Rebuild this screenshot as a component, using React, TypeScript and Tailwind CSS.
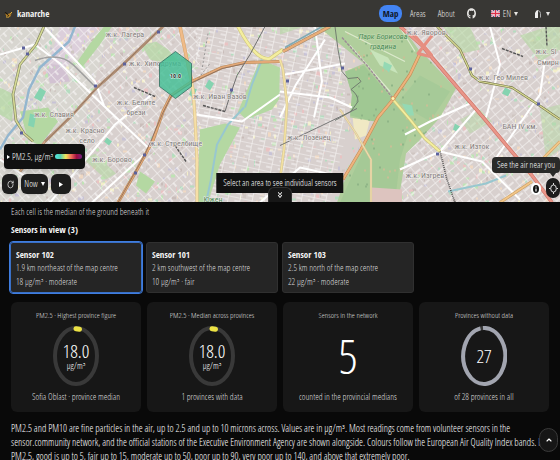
import React from "react";
import { ChevronUp, ChevronsDown, RotateCw } from "lucide-react";
import { FaGithub } from "react-icons/fa";

const FONT = "font-['Open_Sans_Condensed_Light','Liberation_Sans',sans-serif]";
const BOLD = "font-['Open_Sans_Condensed','Liberation_Sans',sans-serif] font-bold";
const MAP_FONT = "font-['Roboto_Condensed','Liberation_Sans',sans-serif]";

const sensors = [
  { name: "Sensor 102", place: "1.9 km northeast of the map centre", value: "18 µg/m³ · moderate", active: true },
  { name: "Sensor 101", place: "2 km southwest of the map centre", value: "10 µg/m³ · fair", active: false },
  { name: "Sensor 103", place: "2.5 km north of the map centre", value: "22 µg/m³ · moderate", active: false },
];

const stats = [
  { title: "PM2.5 · Highest province figure", value: "18.0", unit: "µg/m³", note: "Sofia Oblast · province median", ring: "low" },
  { title: "PM2.5 · Median across provinces", value: "18.0", unit: "µg/m³", note: "1 provinces with data", ring: "low" },
  { title: "Sensors in the network", value: "5", unit: "", note: "counted in the provincial medians", ring: "none" },
  { title: "Provinces without data", value: "27", unit: "", note: "of 28 provinces in all", ring: "full" },
];

const labels: [number, number, string][] = [
  [125, 37, "ж.к. Лагера"],
  [155, 66, "ж.к. Хиподрума"],
  [136, 105, "ж.к. Белите"],
  [136, 115, "брези"],
  [54, 117, "ж.к. Славия"],
  [220, 99, "ж.к. Иван Вазов"],
  [85, 133, "ж.к. Красно"],
  [87, 143, "село"],
  [112, 162, "ж.к. Борово"],
  [176, 146, "ж.к. Стрелбище"],
  [309, 140, "ж.к. Лозенец"],
  [426, 35, "ж.к. Яворов"],
  [503, 80, "ж.к. Гео Милев"],
  [546, 54, "ж.к. Sl"],
  [548, 65, "Смирн"],
  [472, 149, "ж.к. Изток"],
  [520, 129, "БАН IV км."],
  [425, 178, "ж.к. Изгрев"],
];

function rand(seed: number) {
  let s = seed;
  return () => {
    s = (s * 16807) % 2147483647;
    return s / 2147483647;
  };
}

function makeSpecks() {
  const r = rand(77);
  const tones = ["#c9bdba", "#bfe3b5", "#f0d9c4", "#e9c3c3", "#c8c3d6", "#f3efc9", "#b5dcc0", "#cfc6c2"];
  return Array.from({ length: 1500 }, () => ({
    x: Math.round(r() * 560),
    y: Math.round(27 + r() * 176),
    w: 1 + Math.round(r() * 3),
    h: 1 + Math.round(r() * 3),
    c: tones[Math.floor(r() * tones.length)],
  }));
}

function makeTrees() {
  const r = rand(31);
  return Array.from({ length: 170 }, () => ({
    x: Math.round(335 + r() * 115),
    y: Math.round(30 + r() * 172),
    c: r() > 0.5 ? "#8fb587" : "#c9bf96",
  }));
}

const specks = makeSpecks();
const trees = makeTrees();

function Road({ d, edge, fill, w }: { d: string; edge: string; fill: string; w: number }) {
  return (
    <>
      <path d={d} stroke={edge} strokeWidth={w + 1.2} />
      <path d={d} stroke={fill} strokeWidth={w} />
    </>
  );
}

function CityMap() {
  return (
    <svg
      className="absolute inset-0 size-full"
      viewBox="0 27 560 176"
      preserveAspectRatio="xMidYMid slice"
      role="img"
      aria-label="Map of air quality"
    >
      <defs>
        <pattern id="gridA" width="13" height="9" patternUnits="userSpaceOnUse" patternTransform="rotate(-42)">
          <path d="M0 0H13M0 0V9M6 0V5" stroke="#f8f6f5" strokeWidth="1.2" fill="none" />
        </pattern>
        <pattern id="gridB" width="12" height="8" patternUnits="userSpaceOnUse" patternTransform="rotate(12)">
          <path d="M0 0H12M0 0V8M7 4H12" stroke="#f8f6f5" strokeWidth="1.2" fill="none" />
        </pattern>
        <pattern id="gridC" width="14" height="9" patternUnits="userSpaceOnUse" patternTransform="rotate(50)">
          <path d="M0 0H14M0 0V9M8 3V9" stroke="#f8f6f5" strokeWidth="1.2" fill="none" />
        </pattern>
        <clipPath id="park">
          <path d="M318 27H402L420 52L425 56L456 89L440 118L420 140L406 154L402 180L398 203H337L345 180L362 150L375 122L350 118L352 95L345 72L364 64Z" />
        </clipPath>
      </defs>
      <rect y="27" width="560" height="176" fill="#d8d0ce" />
      <path d="M0 27H110L60 203H0Z" fill="#d8d6d0" />
      <path d="M60 27H100L60 75H45Z" fill="#dccfdb" />
      <path d="M45 64L64 66L70 82L50 84Z" fill="#d2c2d2" />
      <g>
        {specks.map((s, i) => (
          <rect key={i} x={s.x} y={s.y} width={s.w} height={s.h} fill={s.c} />
        ))}
      </g>
      <rect y="27" width="200" height="176" fill="url(#gridA)" />
      <path d="M196 27H345V140L330 203H196Z" fill="url(#gridB)" />
      <path d="M402 27H560V203H398L406 154L456 89Z" fill="url(#gridC)" />

      <g fill="#b4d8a2">
        <path d="M112 27L100 45L82 68L76 64L90 44L104 27Z" />
        <path d="M142 46L156 42L168 50L180 62L166 64L150 60Z" opacity=".7" />
        <path d="M20 112L48 108L58 122L40 146L28 140Z" />
        <path d="M260 60L280 68L279 100L272 110L246 120L238 112Z" />
        <path d="M200 130L225 124L240 128L220 165L208 203H197Z" />
        <path d="M140 172L155 182L146 194L136 186Z" />
        <path d="M95 154L116 174L106 180L84 160Z" opacity=".6" />
        <path d="M520 36L548 27H560V50L540 62Z" opacity=".6" />
        <path d="M443 27L470 27L480 50L462 54Z" opacity=".6" />
        <path d="M460 120L480 110L492 122L470 134Z" opacity=".5" />
        <path d="M540 110L560 105V150L546 160Z" opacity=".5" />
        <path d="M280 35L304 27H280Z" opacity=".6" />
        <path d="M0 88L14 95L12 122L0 115Z" opacity=".7" />
      </g>
      <g fill="#85d3b0">
        <path d="M40 88L46 92L41 102L34 98Z" />
        <path d="M30 114L36 116L34 128L28 126Z" />
        <path d="M209 80L214 84L210 91L205 87Z" />
        <path d="M192 88L197 90L193 98L189 95Z" />
        <path d="M505 88L511 91L508 97L502 94Z" />
        <path d="M455 124L460 127L458 133L453 130Z" />
        <path d="M107 138L112 142L109 146L104 142Z" />
      </g>
      <path d="M352 112H372L366 136L355 140Z" fill="#f0e9c4" />

      <g clipPath="url(#park)">
        <rect x="310" y="27" width="150" height="176" fill="#b0ce9c" />
        <path d="M345 72L364 66L392 99L374 122L350 116Z" fill="#a0c893" />
        <path d="M398 103L420 76L450 92L430 122Z" fill="#a6ca98" />
        <path d="M375 125L392 102L412 122L400 160L395 203H340Z" fill="#a5c996" />
        {trees.map((t, i) => (
          <rect key={i} x={t.x} y={t.y} width="2" height="2" fill={t.c} />
        ))}
        <path d="M370 50L388 58L398 74L380 66Z" fill="#c8e4bb" />
        <path d="M384 62L392 66L389 73L383 68Z" fill="#94d9b4" />
        <path d="M402 104L412 106L414 116L408 116Z" fill="#94d9b4" />
        <path d="M345 32L405 62M350 46L390 92M400 28L415 52" stroke="#dce9cd" strokeWidth="1.2" fill="none" />
      </g>
      <path d="M372 188L402 190V203H371Z" fill="#ddc4bf" />

      <g fill="none" strokeLinejoin="round">
        <path d="M75 27L69 42L40 68L29 90L23 118L8 136L0 150" stroke="#93b6cf" strokeWidth="2.4" />
        <path d="M244 108L228 125L217 145L211 180L206 203M245 108L252 85L262 60" stroke="#98c7cf" strokeWidth="2" />
        <path d="M448 192L486 184L506 176" stroke="#98c7cf" strokeWidth="2" />
        <path
          d="M0 55L35 45L60 64L95 98L150 150M45 28L95 82L104 106M196 115L242 122L280 95M280 92L330 98L352 108M280 118L296 85L325 40M315 27L322 82L314 118M285 75L345 64M400 170L440 152L476 110M440 152L482 162L520 200M490 27L500 65L486 118M545 60L540 95L495 160M50 203L115 125L152 95M0 160L45 190M405 135L430 122L470 104M260 203L300 168L345 178M92 203L150 150"
          stroke="#fff"
          strokeWidth="2"
        />
        <path d="M35 61Q60 52 74 66L95 87" stroke="#a0a0a0" strokeWidth="1.6" />
        <Road d="M44 27L36 45L20 65L13 95L16 121L24 134L33 142" edge="#7d8060" fill="#d5d994" w={1.6} />
        <Road d="M180 27L184 46L188 66L193 90L195 118L197 160L197 203" edge="#dcc38d" fill="#f6dfa6" w={2} />
        <Road d="M180 27L184 46L189 70L192 82" edge="#d8a876" fill="#f0bb88" w={2.2} />
        <Road d="M163 27L124 64L97 88L72 116L45 142L20 172" edge="#a58465" fill="#d5a98a" w={1.4} />
        <path d="M163 27L124 64L97 88L72 116L45 142" stroke="#6e5e57" strokeWidth=".7" />
        <Road d="M280 62L245 63L222 68L192 82L171 96L163 112L153 141L136 172L118 203" edge="#b98b5e" fill="#e4a977" w={2} />
        <path d="M245 64L222 69L192 83L171 97L163 113L145 155L118 203" stroke="#776257" strokeWidth=".7" />
        <Road d="M238 27Q256 62 270 59L283 50" edge="#cfc879" fill="#f4ee9f" w={2.4} />
        <Road d="M280 60L283 70L287 105L284 150L280 180L282 203" edge="#d8c890" fill="#f5e3a4" w={1.4} />
        <Road d="M283 52L330 27" edge="#a48769" fill="#e9ad77" w={2.4} />
        <path d="M285 48L322 27" stroke="#7faab4" strokeWidth="1.6" />
        <Road d="M420 54L410 75L393 100L378 118L361 150L343 180" edge="#c48d56" fill="#eeb37d" w={2} />
        <Road d="M340 110L356 134L371 160V203" edge="#d9c89b" fill="#f2dfae" w={1} />
        <Road d="M393 100L410 120L425 139L440 152" edge="#cfc879" fill="#f4ee9f" w={1.8} />
        <Road d="M437 27L460 50L472 76L480 82L512 88L535 103L560 120" edge="#77774b" fill="#d8da93" w={1.2} />
        <Road d="M532 170L560 142M532 182L500 203" edge="#cba060" fill="#f2c589" w={1.8} />
        <Road d="M400 27L422 46L432 58L455 85L485 120L510 150L532 176L552 203" edge="#cf7468" fill="#ea9689" w={2.4} />
        <path d="M432 36L418 54L430 57M413 34L432 56" stroke="#e68e80" strokeWidth="3" />
        <path d="M265 27L250 55L237 76L230 96L225 112" stroke="#707070" strokeWidth="1" />
        <path d="M280 146L322 126L357 109" stroke="#777" strokeWidth="1" />
        <path d="M335 27L338 50L342 72L348 79L358 78L361 82L351 90Q358 95 358 102L351 112L335 121" stroke="#6b746b" strokeWidth=".9" />
        <path d="M342 38L367 66L393 99" stroke="#9d8c97" strokeWidth="1.4" strokeDasharray="3 1" />
        <path d="M208 34L202 70M196 82L210 64" stroke="#888" strokeWidth=".8" strokeDasharray="2 2" />
        <path d="M134 88L155 97M203 106L225 112M173 143L186 162M502 49L523 57M546 27L547 47" stroke="#555" strokeWidth="1.4" strokeDasharray="3 1" />
        <path d="M440 152L447 180L455 203" stroke="#555" strokeWidth="1.6" strokeDasharray="1 1" />
        <circle cx="393" cy="99" r="2" fill="#fff2b5" stroke="#d89c5f" />
      </g>
      <g fill="#5d629c">
        {[[23, 48], [27, 54], [95, 86], [158, 32], [124, 64], [21, 133], [144, 155], [135, 173], [231, 90], [287, 81], [342, 68], [437, 154], [470, 69], [538, 104]].map(([x, y]) => (
          <rect key={`${x}-${y}`} x={x - 1} y={y - 1} width="3" height="3" />
        ))}
      </g>
      <g className={MAP_FONT} fontSize="8" textAnchor="middle" fill="#827c7a" stroke="#f2efed" strokeWidth="1" paintOrder="stroke">
        {labels.map(([x, y, t]) => (
          <text key={t + x} x={x} y={y}>{t}</text>
        ))}
        <g fill="#4c8a54" stroke="#c5ddb6" fontStyle="italic">
          <text x="383" y="39">Парк Борисова</text>
          <text x="383" y="49">градина</text>
        </g>
        <text x="213" y="202" fill="#4c8a54">Южен</text>
      </g>
      <path d="M175.500 52L191.500 64V87L175.500 99L159.500 87V64Z" fill="#3fbe94" fillOpacity=".8" stroke="#336f61" strokeWidth=".8" />
      <text x="175.500" y="78.500" textAnchor="middle" fontSize="6" className={`${MAP_FONT} font-bold`} fill="#26302d" stroke="#e6f8f1" strokeWidth="1" paintOrder="stroke">
        10.0
      </text>
    </svg>
  );
}

function Flag() {
  return (
    <svg className="h-[7px] w-[9px]" viewBox="0 0 9 7" aria-hidden="true">
      <rect width="9" height="7" fill="#34437d" />
      <path d="M0 0L9 7M9 0L0 7" stroke="#fff" strokeWidth="1.6" />
      <path d="M0 0L9 7M9 0L0 7" stroke="#d33a50" strokeWidth=".6" />
      <path d="M4.500 0V7M0 3.500H9" stroke="#fff" strokeWidth="2.4" />
      <path d="M4.500 0V7M0 3.500H9" stroke="#dd2f48" strokeWidth="1.3" />
    </svg>
  );
}

function Caret() {
  return (
    <svg className="h-1 w-1" viewBox="0 0 4 4" aria-hidden="true">
      <path d="M0 0H4L2 4Z" fill="currentColor" />
    </svg>
  );
}

function Header() {
  return (
    <header className="flex h-[27px] items-center bg-[#383734] pr-2.5 pl-1 text-[9px] leading-[10px] text-[#e6e5e2]">
      <a href="#home" className={`flex items-center gap-1 text-[#f3f3f2] ${BOLD}`}>
        <svg className="h-2.5 w-[9px]" viewBox="0 0 9 10" aria-hidden="true">
          <path d="M1 4L3 4.500L4 5L6 4L8 3L7 6L6 8L3 8.500L2 6.500Z" fill="#b98226" />
          <path d="M1 3.500L4 5.500M3 8L5 6.500M6 4L7 5" stroke="#171510" strokeWidth="1.200" fill="none" />
          <path d="M6 5L8 3M2 8H5" stroke="#f2c247" strokeWidth=".8" />
        </svg>
        kanarche
      </a>
      <nav className="ml-auto flex items-center">
        <a href="#map" className={`mr-2 flex h-[17px] w-[23px] items-center justify-center rounded-lg bg-[#4384f3] text-[#10182a] ${BOLD}`}>Map</a>
        <a href="#areas" className="mr-3">Areas</a>
        <a href="#about" className="mr-3">About</a>
        <a href="#source" aria-label="GitHub" className="mr-[15px]">
          <FaGithub className="h-[11px] w-[9px]" preserveAspectRatio="none" />
        </a>
        <button type="button" className="mr-[17px] flex items-center gap-[3px]">
          <Flag /> EN <Caret />
        </button>
        <button type="button" aria-label="Theme" className="flex items-center gap-[5px]">
          <svg className="h-2 w-1.5" viewBox="0 0 6 8" aria-hidden="true">
            <path d="M0 3Q1 0 3 0V8H0Z" fill="#eee" />
            <path d="M3 .5Q5.500 1 5.500 3.500V7.500" fill="none" stroke="#aaa" />
          </svg>
          <Caret />
        </button>
      </nav>
    </header>
  );
}

function MapPanel() {
  return (
    <section className="relative h-[175px] overflow-hidden text-[9px] leading-[10px] text-white">
      <CityMap />
      <div className="absolute bottom-2 left-0.5 flex flex-col items-start gap-[5px]">
        <button type="button" className="ml-0.5 flex h-[25px] items-center gap-0.5 rounded bg-[#111] px-[3px] whitespace-nowrap shadow-md">
          <svg className="h-1 w-[3px]" viewBox="0 0 3 4" aria-hidden="true"><path d="M0 0L3 2L0 4Z" fill="#fff" /></svg>
          PM2.5, µg/m³
          <span className="h-[5px] w-[27px] rounded-full bg-[linear-gradient(90deg,#50e6e0,#55ceb0,#efe65a,#ef6a58,#9c0d40,#742083)]" />
        </button>
        <div className="flex gap-[3px]">
          <button type="button" aria-label="Reload" className="flex h-5 w-4 items-center justify-center rounded-md bg-[#1e1e1d] shadow">
            <RotateCw className="h-[9px] w-[7px]" strokeWidth={2} preserveAspectRatio="none" />
          </button>
          <button type="button" className="flex h-5 w-[27px] items-center justify-center gap-[3px] rounded-md bg-[#1e1e1d] shadow">
            Now <Caret />
          </button>
          <button type="button" aria-label="Play" className="flex h-5 w-5 items-center justify-center rounded-md bg-[#1e1e1d] shadow">
            <svg className="h-[5px] w-1" viewBox="0 0 4 5" aria-hidden="true"><path d="M0 0L4 2.500L0 5Z" fill="#fff" /></svg>
          </button>
        </div>
      </div>
      <p className="absolute bottom-[9px] left-1/2 flex h-5 -translate-x-1/2 items-center bg-[#121212] px-[7px] whitespace-nowrap">
        Select an area to see individual sensors
      </p>
      <button type="button" aria-label="Collapse map" className="absolute bottom-0 left-1/2 flex h-[15px] w-6 -translate-x-1/2 items-center justify-center rounded-t-md border border-b-0 border-[#333] bg-[#171717]">
        <ChevronsDown className="h-2.5 w-2" strokeWidth={2.5} preserveAspectRatio="none" />
      </button>
      <div className="absolute right-0 bottom-1 flex flex-col items-end">
        <p className="flex h-4 items-center rounded bg-[#2a2a29] px-[5px] whitespace-nowrap">See the air near you</p>
        <svg className="mr-1 h-[5px] w-1.5" viewBox="0 0 6 5" aria-hidden="true"><path d="M0 0H6L3 4Z" fill="#2a2a29" /></svg>
        <div className="flex items-end gap-[5px]">
          <button type="button" aria-label="Attribution" className="mb-[3px] flex h-3 w-2.5 items-center justify-center rounded-full bg-white">
            <svg className="h-2 w-1.5" viewBox="0 0 6 8" aria-hidden="true">
              <ellipse cx="3" cy="4" rx="3" ry="4" fill="#111" />
              <path d="M3 3.500V6.500M3 1.500V2.500" stroke="#fff" strokeWidth="1.200" />
            </svg>
          </button>
          <button type="button" aria-label="Locate me" className="flex h-5 w-3.5 items-center justify-center rounded-full bg-[#1c1c1c]">
            <svg className="h-[11px] w-[9px]" viewBox="0 0 9 11" aria-hidden="true">
              <ellipse cx="4.500" cy="5.500" rx="2.800" ry="3.600" fill="none" stroke="#ddd" />
              <path d="M4.500 0V2M4.500 9V11M0 5.500H1.500M7.500 5.500H9" fill="none" stroke="#ddd" />
            </svg>
          </button>
        </div>
      </div>
    </section>
  );
}

function Ring({ full }: { full: boolean }) {
  return (
    <svg className="absolute inset-0 size-full" viewBox="0 0 46 60" aria-hidden="true">
      <ellipse cx="23" cy="30" rx="21" ry="28" fill="none" stroke="#393939" strokeWidth="4" />
      {full ? (
        <path d="M22 2A21 28 0 1 1 19.500 2.400" fill="none" stroke="#a2a5b0" strokeWidth="4" />
      ) : (
        <path d="M23 2.700L26.500 3.200" fill="none" stroke="#ece244" strokeWidth="5" strokeLinecap="round" />
      )}
    </svg>
  );
}

export default function App() {
  return (
    <div className={`min-h-screen overflow-x-hidden bg-[#090909] text-white ${FONT}`}>
      <Header />
      <MapPanel />
      <main className="px-2.5 pt-[5px]">
        <p className="pl-px text-[9px] leading-[10px] text-[#dcdcdc]">Each cell is the median of the ground beneath it</p>
        <h2 className={`mt-2 pl-px text-[9px] leading-[10px] text-[#f5f5f5] ${BOLD}`}>Sensors in view (3)</h2>
        <div className="mt-[7px] flex gap-1">
          {sensors.map((s) => (
            <button
              key={s.name}
              type="button"
              className={`h-[51px] w-[132px] rounded-[3px] border bg-[#252525] px-[5px] text-left ${s.active ? "border-[#3a70c6] outline-1 outline-[#3f7de0]" : "border-[#303030]"}`}
            >
              <strong className={`block text-[9px] leading-[13px] text-[#f5f5f5] ${BOLD}`}>{s.name}</strong>
              <span className="block text-[9px] leading-[14px] whitespace-nowrap text-[#dcdcdc]">{s.place}</span>
              <span className="block text-[9px] leading-[13px] whitespace-nowrap text-[#dcdcdc]">{s.value}</span>
            </button>
          ))}
        </div>
        <div className="mt-[9px] grid grid-cols-4 gap-1.5 px-px">
          {stats.map((s) => (
            <article key={s.title} className="flex h-[110px] flex-col items-center rounded-md bg-[#171717] pt-2 text-center">
              <h3 className="text-[8px] leading-[10px] whitespace-nowrap text-[#dcdcdc]">{s.title}</h3>
              <div className="relative mt-1.5 flex h-[60px] w-[46px] flex-col items-center justify-center">
                {s.ring !== "none" && <Ring full={s.ring === "full"} />}
                <span className={s.ring === "none" ? "text-[48px] leading-[60px]" : "text-[19px] leading-[20px]"}>{s.value}</span>
                {s.unit && <span className="text-[9px] leading-[10px]">{s.unit}</span>}
              </div>
              <p className="mt-1.5 text-[9px] leading-[10px] whitespace-nowrap text-[#dcdcdc]">{s.note}</p>
            </article>
          ))}
        </div>
        <p className="mt-[9px] px-px text-[10px] leading-[14px] whitespace-nowrap">
          PM2.5 and PM10 are fine particles in the air, up to 2.5 and up to 10 microns across. Values are in µg/m³. Most readings come from volunteer sensors in the
          <br />
          sensor.community network, and the official stations of the Executive Environment Agency are shown alongside. Colours follow the European Air Quality Index bands. For
          <br />
          PM2.5, good is up to 5, fair up to 15, moderate up to 50, poor up to 90, very poor up to 140, and above that extremely poor.
        </p>
      </main>
      <button type="button" aria-label="Back to top" className="fixed right-0.5 bottom-2 flex h-6 w-[19px] items-center justify-center rounded-full border border-[#3a3a3a] bg-[#161616] text-white">
        <ChevronUp className="size-2" strokeWidth={3.5} />
      </button>
    </div>
  );
}
